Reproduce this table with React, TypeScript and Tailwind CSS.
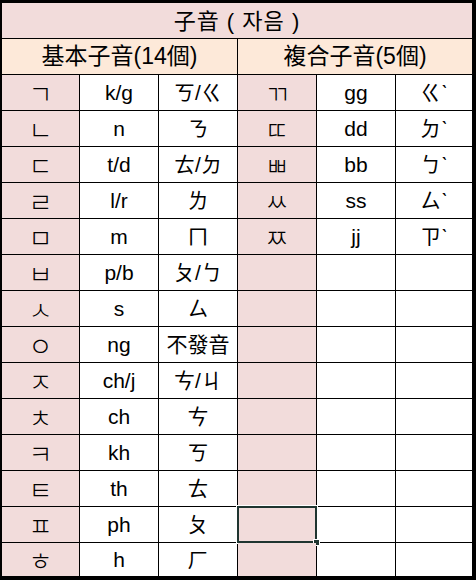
const basicRows = [
  ["ㄱ", "k/g", "ㄎ/ㄍ"],
  ["ㄴ", "n", "ㄋ"],
  ["ㄷ", "t/d", "ㄊ/ㄉ"],
  ["ㄹ", "l/r", "ㄌ"],
  ["ㅁ", "m", "ㄇ"],
  ["ㅂ", "p/b", "ㄆ/ㄅ"],
  ["ㅅ", "s", "ㄙ"],
  ["ㅇ", "ng", "不發音"],
  ["ㅈ", "ch/j", "ㄘ/ㄐ"],
  ["ㅊ", "ch", "ㄘ"],
  ["ㅋ", "kh", "ㄎ"],
  ["ㅌ", "th", "ㄊ"],
  ["ㅍ", "ph", "ㄆ"],
  ["ㅎ", "h", "ㄏ"],
];

const doubleRows = [
  ["ㄲ", "gg", "ㄍˋ"],
  ["ㄸ", "dd", "ㄉˋ"],
  ["ㅃ", "bb", "ㄅˋ"],
  ["ㅆ", "ss", "ㄙˋ"],
  ["ㅉ", "jj", "ㄗˋ"],
];

const pink = "bg-[#f2dcdb]";

function Jamo({ children, selected }: { children?: React.ReactNode; selected?: boolean }) {
  return (
    <div
      className={`relative flex items-center justify-center ${pink} font-['Noto_Sans_CJK_KR',sans-serif] text-[26px] font-light leading-none text-black`}
    >
      {children}
      {selected ? (
        <>
          <div className="pointer-events-none absolute -inset-px border-2 border-[#1f3530] outline outline-1 outline-white" />
          <div className="absolute -bottom-[4px] -right-[4px] h-[7px] w-[7px] border border-white bg-[#1f3530]" />
        </>
      ) : null}
    </div>
  );
}

function Cell({ children }: { children?: React.ReactNode }) {
  return (
    <div className="flex items-center justify-center bg-white text-[21px] text-black">
      {children}
    </div>
  );
}

export default function App() {
  return (
    <div className="h-[580px] w-[476px] bg-white font-['Liberation_Sans','Noto_Sans_CJK_TC',sans-serif]">
      <div className="grid h-full w-full grid-cols-[77px_78px_78px_78px_78px_76px] grid-rows-[35px_35px_repeat(13,35px)_33px] gap-px border-b-4 border-l-2 border-r-4 border-t-[3px] border-black bg-black">
        <div className={`col-span-6 flex items-center justify-center ${pink} text-[22px] tracking-[1px] text-black`}>
          <span>
            子音 ( <span className="font-['Noto_Sans_CJK_KR',sans-serif]">자음</span> )
          </span>
        </div>
        <div className="col-span-3 flex items-center justify-center bg-[#fde9d9] text-[23px] text-black">
          基本子音(14個)
        </div>
        <div className="col-span-3 flex items-center justify-center bg-[#fde9d9] text-[23px] text-black">
          複合子音(5個)
        </div>
        {basicRows.map((row, i) => {
          const d = doubleRows[i];
          return [
            <Jamo key={`a${i}`}>{row[0]}</Jamo>,
            <Cell key={`b${i}`}>{row[1]}</Cell>,
            <Cell key={`c${i}`}>{row[2]}</Cell>,
            <Jamo key={`d${i}`} selected={i === 12}>
              {d ? d[0] : null}
            </Jamo>,
            <Cell key={`e${i}`}>{d ? d[1] : null}</Cell>,
            <Cell key={`f${i}`}>{d ? d[2] : null}</Cell>,
          ];
        })}
      </div>
    </div>
  );
}
